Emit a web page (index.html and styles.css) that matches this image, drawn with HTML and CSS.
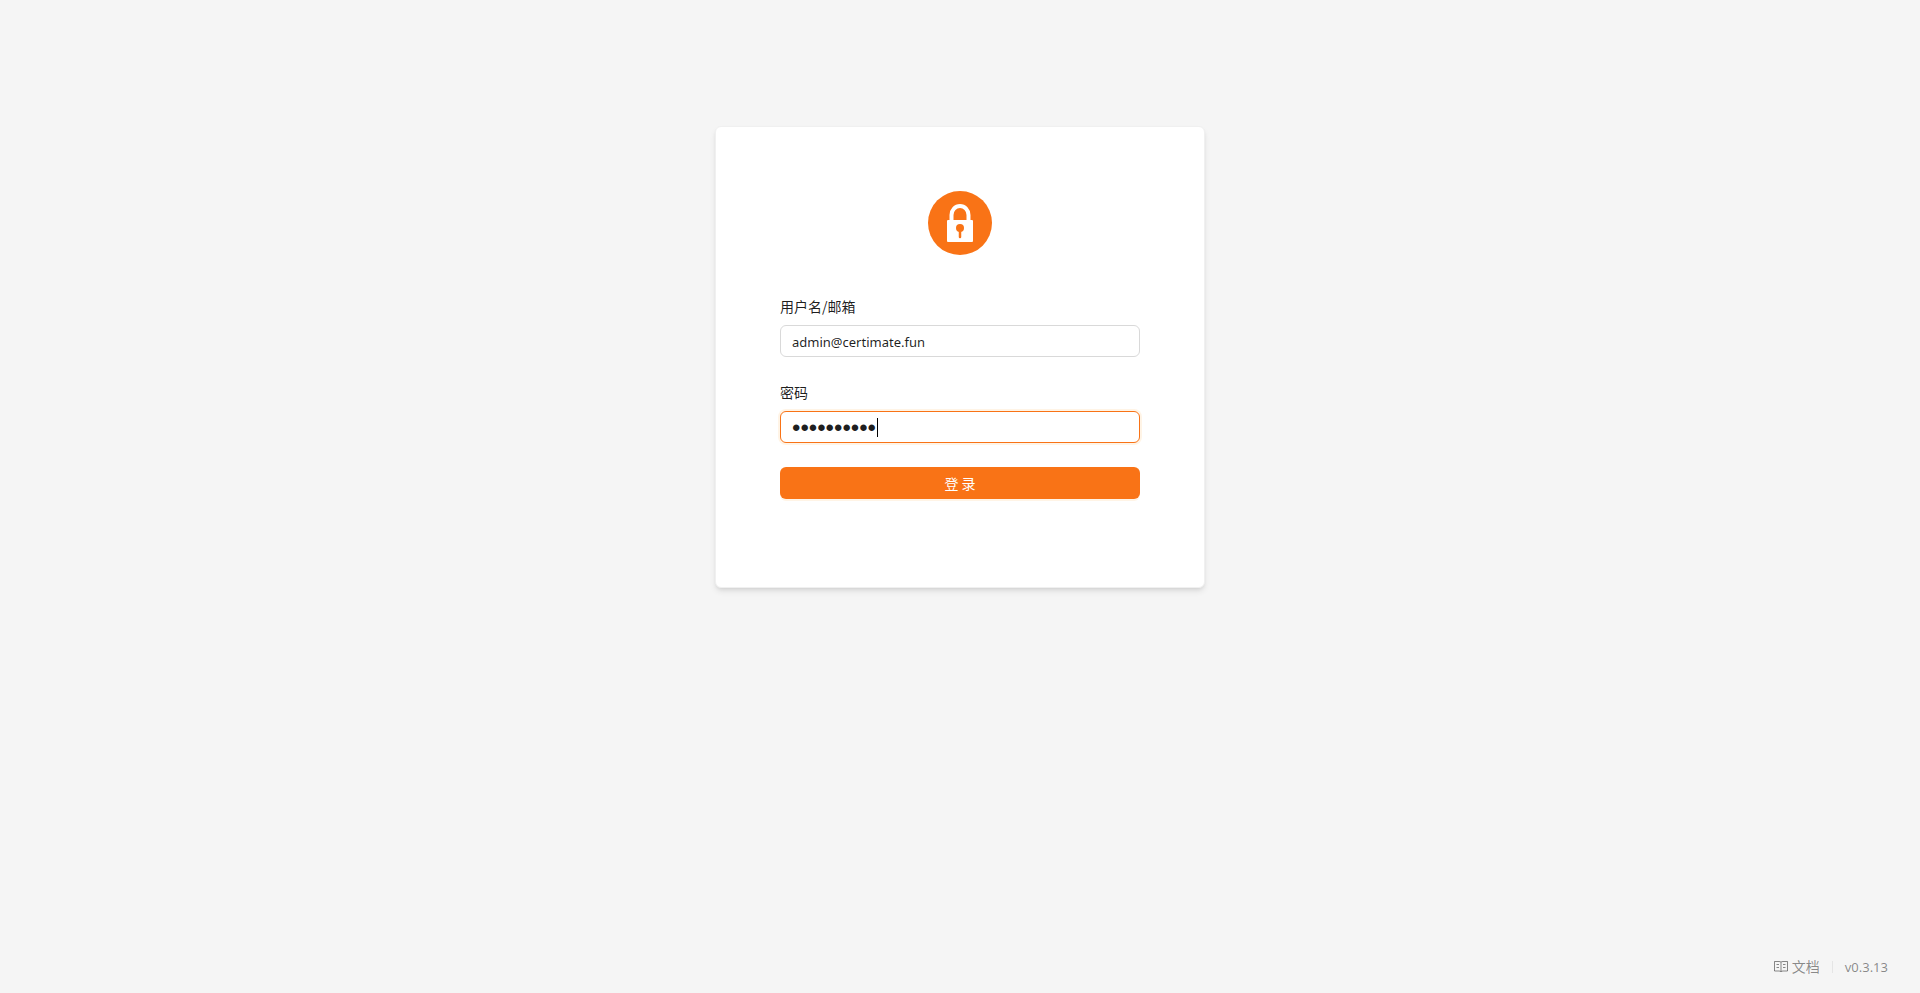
FILE: index.html
```html
<!DOCTYPE html>
<html lang="zh-CN">
<head>
<meta charset="utf-8">
<meta name="viewport" content="width=device-width, initial-scale=1">
<title>Certimate</title>
<link rel="stylesheet" href="styles.css">
</head>
<body>
<main class="page">
  <section class="card">
    <svg class="logo" viewBox="0 0 64 64" aria-hidden="true">
      <circle cx="32" cy="32" r="32" fill="#f97316"/>
      <path d="M23.500 31V24a8.500 9 0 0 1 17 0v7" fill="none" stroke="#fff" stroke-width="4"/>
      <rect x="19" y="29" width="26" height="22" rx="1" fill="#fff"/>
      <circle cx="32" cy="37" r="4" fill="#f97316"/>
      <path d="M32 38v8" stroke="#f97316" stroke-width="2.500" stroke-linecap="round"/>
    </svg>
    <form class="form">
      <div class="field">
        <label class="label" for="username">用户名/邮箱</label>
        <input class="input" id="username" type="text" value="admin@certimate.fun">
      </div>
      <div class="field">
        <label class="label" for="password">密码</label>
        <div class="control">
          <input class="input input-password" id="password" type="password" value="1234567890">
          <span class="caret"></span>
        </div>
      </div>
      <button class="submit" type="button">登 录</button>
    </form>
  </section>
  <footer class="footer">
    <a class="link" href="#docs">
      <svg class="book" viewBox="0 0 14 14" fill="none" stroke="currentColor" aria-hidden="true">
        <path d="M.5 1.500h4.500q1.500 0 2 .7q.5-.7 2-.7h4.500v9.500h-4.500q-1.500 0-2 .8q-.5-.8-2-.8h-4.500zM7 2.200v9.500M2.500 4.500h2.500M2.500 7.500h2.500M9 4.500h2.500M9 7.500h2.500"/>
      </svg>
      <span class="docs">文档</span>
    </a>
    <span class="divider"></span>
    <a class="link" href="#version">v0.3.13</a>
  </footer>
</main>
</body>
</html>
```
FILE: styles.css
```css
* {
  box-sizing: border-box;
}

body {
  margin: 0;
  background: #f5f5f5;
  color: rgba(0, 0, 0, 0.88);
  font-family: "Noto Sans", "Noto Sans CJK SC", sans-serif;
  font-size: 13px;
  line-height: 22px;
}

.page {
  display: flex;
  flex-direction: column;
  align-items: center;
  justify-content: space-between;
  min-height: 100vh;
  padding-top: 126px;
}

.card {
  display: flex;
  flex-direction: column;
  align-items: center;
  gap: 40px;
  width: 100%;
  max-width: 490px;
  padding: 64px 64px 88px;
  border: 1px solid #f0f0f0;
  border-radius: 6px;
  background: #fff;
  box-shadow: 0 4px 6px -1px rgba(0, 0, 0, 0.1), 0 2px 4px -2px rgba(0, 0, 0, 0.1);
}

.logo {
  width: 64px;
  height: 64px;
}

.form {
  display: flex;
  flex-direction: column;
  gap: 24px;
  width: 100%;
}

.field {
  display: flex;
  flex-direction: column;
  gap: 8px;
}

.label {
  font-family: "Noto Sans CJK SC", sans-serif;
  font-size: 14px;
}

.control {
  position: relative;
}

.input {
  display: block;
  width: 100%;
  height: 32px;
  padding: 5px 11px 3px;
  border: 1px solid #d9d9d9;
  border-radius: 6px;
  outline: none;
  background: #fff;
  color: inherit;
  font: inherit;
}

.input-password {
  border-color: #f97316;
  box-shadow: 0 0 0 2px rgba(255, 150, 5, 0.1);
  font-family: "Liberation Sans", sans-serif;
  font-size: 24px;
}

.caret {
  position: absolute;
  top: 7px;
  left: 97px;
  width: 1px;
  height: 19px;
  background: #000;
}

.submit {
  height: 32px;
  padding: 4px 15px;
  border: 0;
  border-radius: 6px;
  background: #f97316;
  box-shadow: 0 2px 0 rgba(255, 150, 5, 0.1);
  color: #fff;
  font-family: "Noto Sans CJK SC", sans-serif;
  font-size: 14px;
  line-height: 22px;
}

.footer {
  display: flex;
  align-items: center;
  align-self: flex-end;
  gap: 12px;
  padding: 15px 32px;
}

.link {
  display: flex;
  align-items: center;
  gap: 4px;
  color: rgba(0, 0, 0, 0.45);
  text-decoration: none;
}

.docs {
  font-size: 14px;
}

.book {
  width: 14px;
  height: 14px;
}

.divider {
  width: 1px;
  height: 12px;
  background: #e5e5e5;
}
```
